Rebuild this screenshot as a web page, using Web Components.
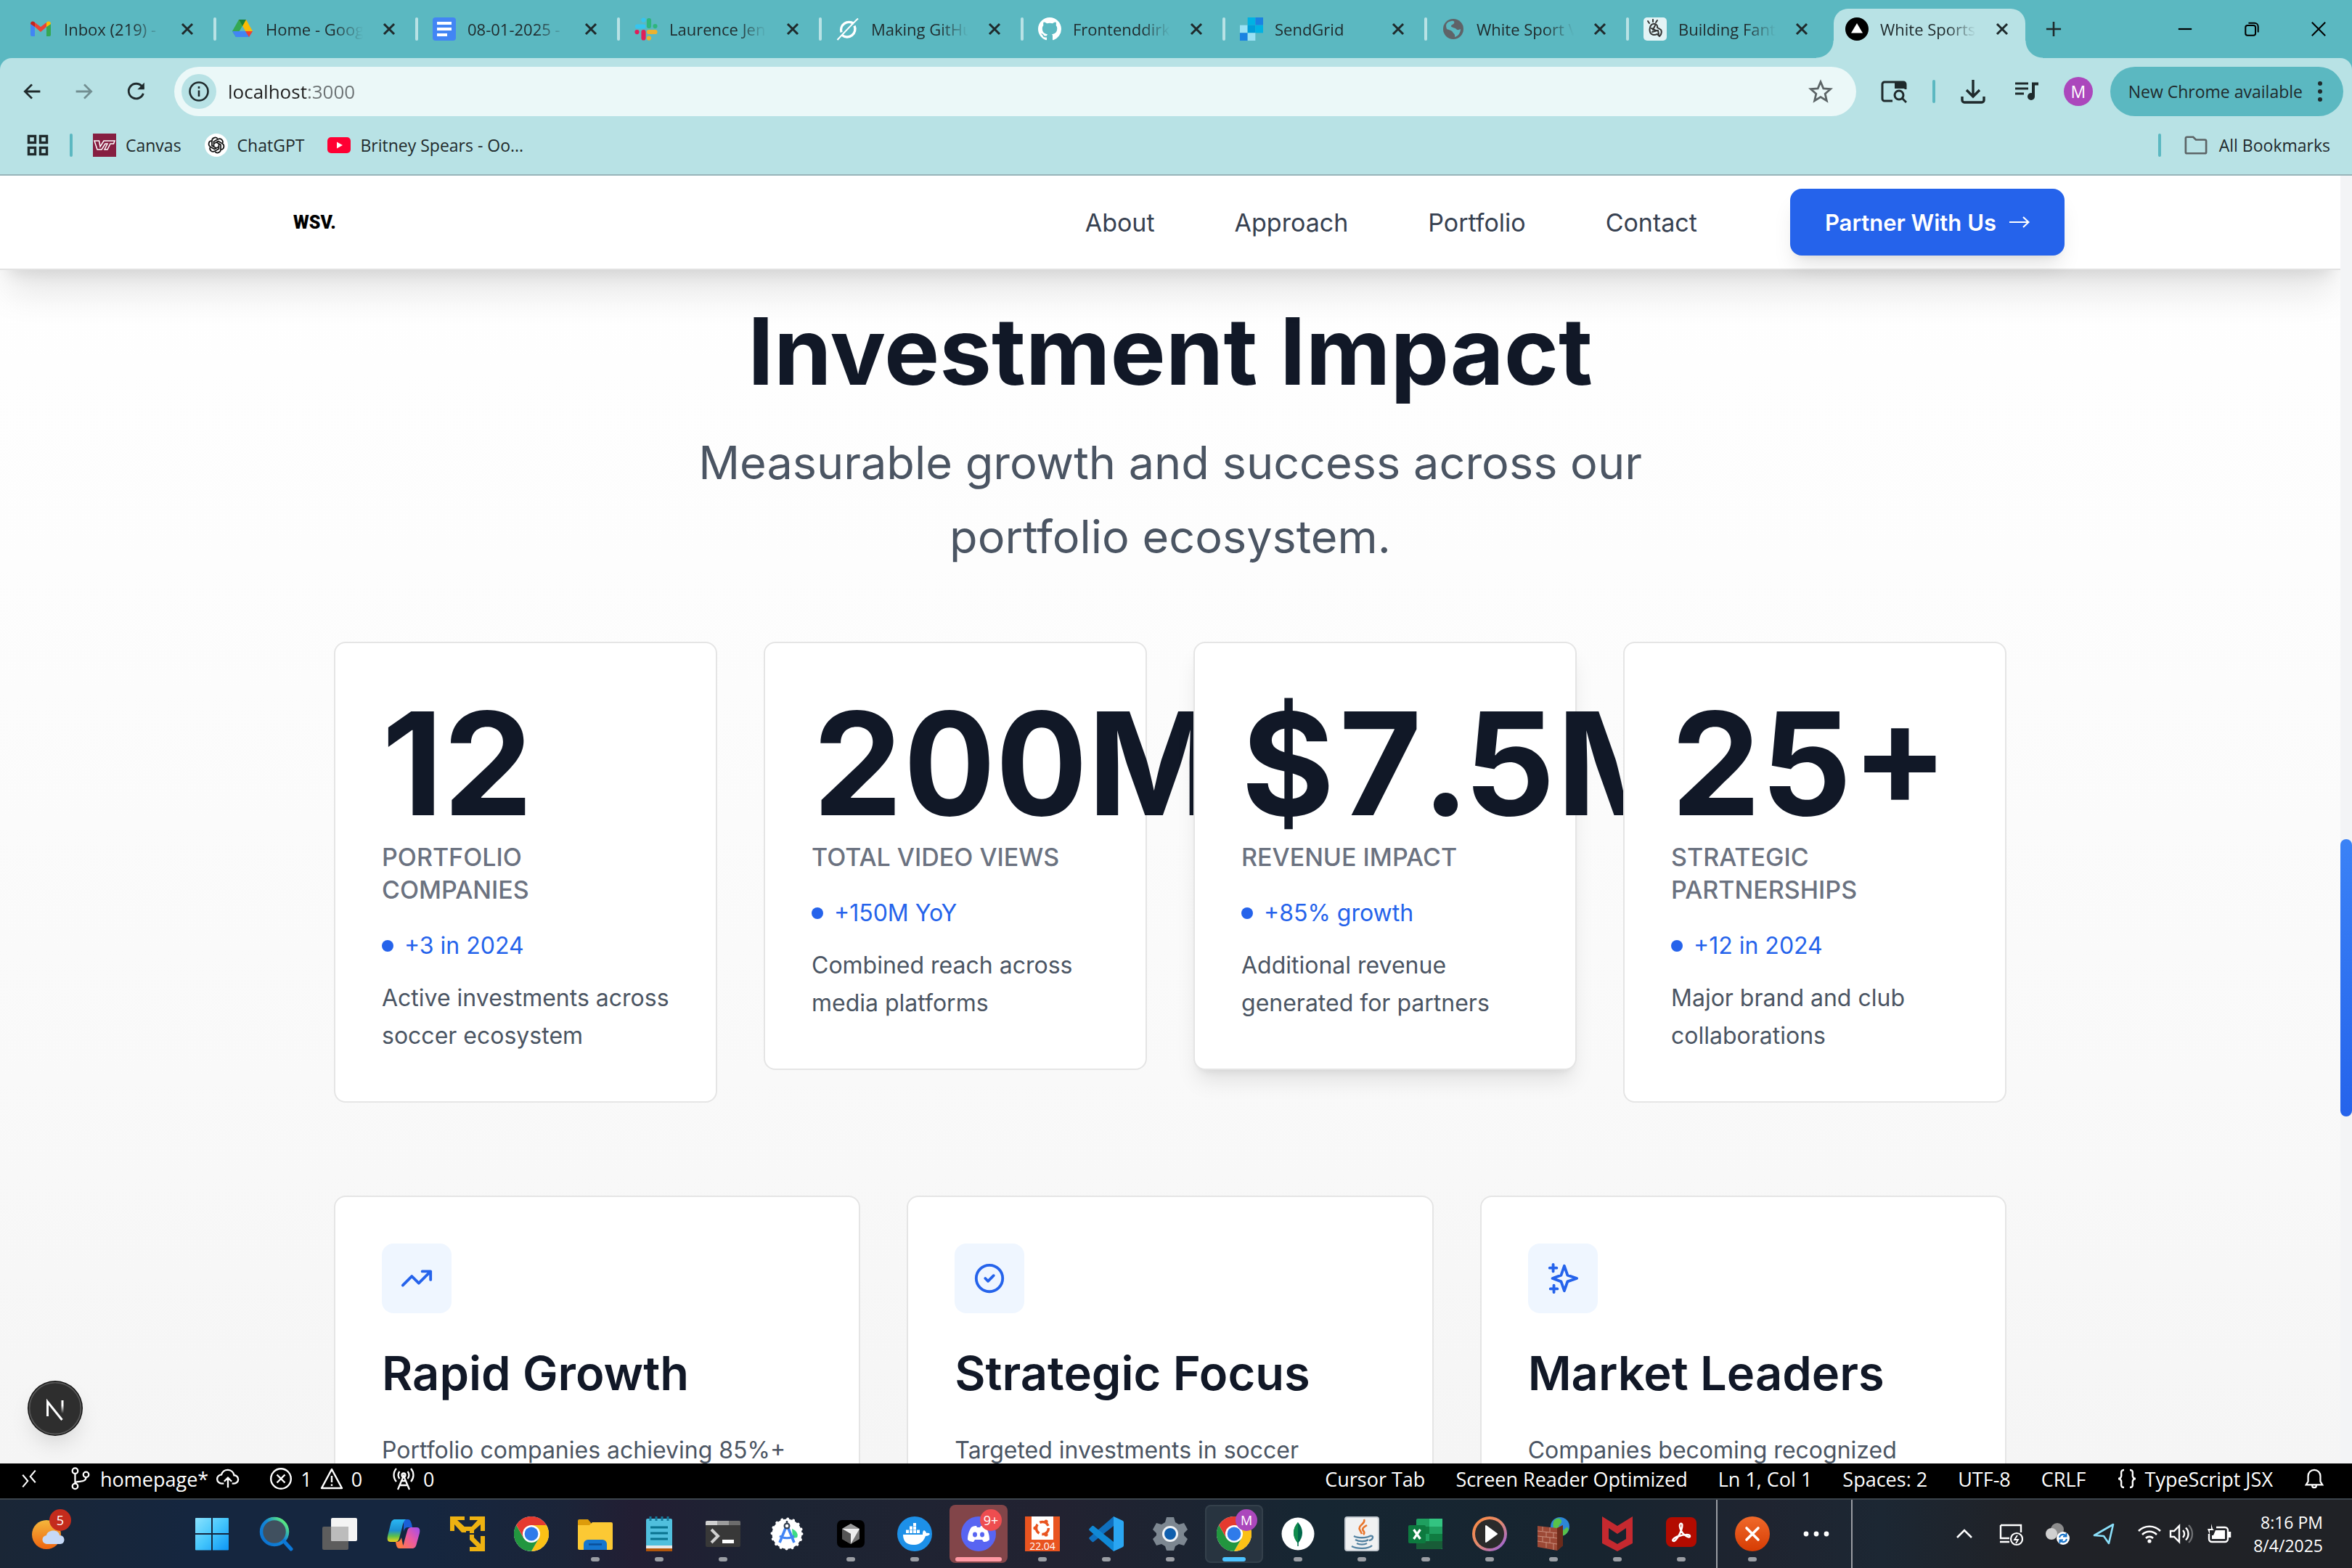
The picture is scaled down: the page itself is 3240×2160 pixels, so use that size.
<!DOCTYPE html>
<html lang="en">
<head>
<meta charset="utf-8">
<title>White Sports Ventures</title>
<style>
  html, body { margin: 0; height: 100%; }
  body { overflow: hidden; font-family: "Open Sans", "Noto Sans", sans-serif; }
</style>
</head>
<body>
<desktop-screen></desktop-screen>
<script>
/* ---------- icon registry: [viewBox, markup] ---------- */
const S = 'fill="none" stroke="currentColor"';
const CHROME = `<circle cx="24" cy="24" r="24" fill="#fff"/>
  <path d="M44.800 12A24 24 0 0 1 24 48L34.400 30 24 12Z" fill="#fbc116"/>
  <path d="M3.200 12A24 24 0 0 0 24 48L34.400 30 24 34 13.600 30Z" fill="#22963f"/>
  <path d="M3.200 12A24 24 0 0 1 44.800 12H24L13.600 30Z" fill="#e53a2f"/>
  <circle cx="24" cy="24" r="12" fill="#fff"/><circle cx="24" cy="24" r="9.400" fill="#2f7bea"/>`;
const PETAL = [0, 60, 120, 180, 240, 300].map(a => `<path d="M12.500 17.800V11l5.700-3.300a4.600 4.600 0 0 1 6.600 5.200" transform="rotate(${a} 16 16)"/>`).join('');
const ICONS = {
  gmail: ['0 0 32 32', `<path d="M2 9v15a2 2 0 0 0 2 2h4V13Z" fill="#4285f4"/><path d="M30 9v15a2 2 0 0 1-2 2h-4V13Z" fill="#34a853"/><path d="M8 13v-6l8 6 8-6v6l-8 7Z" fill="#ea4335"/><path d="M2 9c0-4 4-4.500 6-2v6L2 9Z" fill="#c5221f"/><path d="M30 9c0-4-4-4.500-6-2v6Z" fill="#fbbc04"/>`],
  drive: ['0 0 32 32', `<path d="M11 3h10l-5 9L7 27 2 19Z" fill="#34a853"/><path d="M11 3h10l9 16H20Z" fill="#fbbc04"/><path d="M2 19h28l-5 8H7Z" fill="#4285f4"/><path d="M20 19h10l-5 8Z" fill="#ea4335"/><path d="M16 12l4 7h-8Z" fill="#5bb8c1"/><path d="M11 3h10l-5 9Z" fill="#188038"/>`],
  docs: ['0 0 32 32', `<rect width="32" height="32" rx="4" fill="#4285f4"/><path d="M6 8h20M6 16h20M6 24h14" stroke="#fff" stroke-width="4"/>`],
  slack: ['0 0 32 32', `<g stroke-width="6.200" stroke-linecap="round"><path d="M12.500 12.500H4" stroke="#36c5f0"/><path d="M12.500 3.500v.1" stroke="#36c5f0"/><path d="M20 12V4" stroke="#2eb67d"/><path d="M28.500 12v.1" stroke="#2eb67d"/><path d="M20 20h8.500" stroke="#ecb22e"/><path d="M20 28.500v.1" stroke="#ecb22e"/><path d="M12.500 20v8.500" stroke="#e01e5a"/><path d="M3.500 20v.1" stroke="#e01e5a"/></g>`],
  making: ['0 0 32 32', `<g fill="none" stroke="#fff"><path d="M24 8.500A11 11 0 0 0 7 20.500M8 24.500a11 11 0 0 0 17-13" stroke-width="3.400"/><path d="M1.500 31C8 24 21 10 30 1.500" stroke-width="2"/></g>`],
  github: ['0 0 16 16', `<path fill="#fff" d="M8 0C3.580 0 0 3.580 0 8c0 3.540 2.290 6.530 5.470 7.590.4.070.55-.17.55-.38 0-.19-.010-.82-.010-1.490-2.010.37-2.530-.49-2.690-.94-.090-.23-.48-.94-.82-1.130-.28-.15-.68-.52-.010-.53.63-.010 1.080.58 1.230.82.72 1.210 1.870.87 2.330.66.070-.52.28-.87.51-1.070-1.780-.2-3.640-.89-3.640-3.950 0-.87.31-1.590.82-2.150-.080-.2-.36-1.020.080-2.120 0 0 .67-.21 2.200.82.64-.18 1.320-.27 2-.27s1.360.09 2 .27c1.530-1.040 2.200-.82 2.200-.82.44 1.100.16 1.920.080 2.120.51.56.82 1.270.82 2.150 0 3.070-1.870 3.750-3.650 3.950.29.25.54.73.54 1.480 0 1.070-.010 1.930-.010 2.200 0 .21.15.46.55.38A8 8 0 0 0 16 8c0-4.420-3.580-8-8-8Z"/>`],
  sendgrid: ['0 0 33 33', `<path d="M11 0h11v11H11Z" fill="#00b2e3"/><path d="M22 0h11v11H22Z" fill="#1a82e2"/><path d="M0 11h11v11H0Z" fill="#99e1f4"/><path d="M11 11h11v11H11Z" fill="#009dd9"/><path d="M22 11h11v11H22Z" fill="#00b2e3"/><path d="M0 22h11v11H0Z" fill="#1a82e2"/><path d="M11 22h11v11H11Z" fill="#99e1f4"/>`],
  globe: ['0 0 32 32', `<circle cx="16" cy="16" r="14" fill="#5f6368"/><path d="M13 5c4-1 5 1 4 3s-4 2-4 4 5 2 7 4 4 1 6 0c0 6-4 10-8 11 1-4-2-5-3-7s-5-3-8-4c-3-8 2-10 6-11Z" fill="#5bb8c1"/><path d="M20 5c5 2 7 6 7 9-3 1-5 0-5-2s-3-2-3-4 1-2 1-3Z" fill="#5f6368"/>`],
  rocket: ['0 0 32 32', `<rect width="32" height="32" rx="5" fill="#e3f3f5"/><g fill="none" stroke="#333" stroke-width="2" stroke-linecap="round" stroke-linejoin="round"><path d="M11 10c4-3 9 0 8 4l5 3c2 4 0 7-2 9l-3-3c-4 2-9 1-10-3s-1-7 2-10Z"/><path d="M11 15l6 3M12 20l7-2M16 11l-3 6M20 18l1 5"/><path d="M8 8 6 5M13 6V3M17 7l2-3"/></g>`],
  vercel: ['0 0 32 32', `<circle cx="16" cy="16" r="16" fill="#000"/><path d="M16 8l8 13.500H8Z" fill="#fff"/>`],
  x: ['0 0 24 24', `<path d="M5 5l14 14M19 5 5 19" ${S} stroke-width="3"/>`],
  plus: ['0 0 24 24', `<path d="M12 1v22M1 12h22" ${S} stroke-width="2.800"/>`],
  min: ['0 0 24 24', `<path d="M2 12h20" ${S} stroke-width="2.400"/>`],
  restore: ['0 0 24 24', `<rect x="2.500" y="6.500" width="15" height="15" rx="3" ${S} stroke-width="2.200"/><path d="M7 3h9a5.500 5.500 0 0 1 5.500 5.500V17" ${S} stroke-width="2.200"/>`],
  winx: ['0 0 24 24', `<path d="M2 2l20 20M22 2 2 22" ${S} stroke-width="2.200"/>`],
  back: ['0 0 32 32', `<path d="M29 16H6M16 5 5 16l11 11" ${S} stroke-width="3.200"/>`],
  fwd: ['0 0 32 32', `<path d="M3 16h23M16 5l11 11-11 11" ${S} stroke-width="3.200"/>`],
  reload: ['0 0 32 32', `<path d="M26 19A11 11 0 1 1 24 8.500l2.500 3" ${S} stroke-width="3"/><path d="M27.500 3v10h-10Z" fill="currentColor"/>`],
  info: ['0 0 32 32', `<circle cx="16" cy="16" r="12.500" ${S} stroke-width="2.600"/><path d="M16 14.500V23M16 9v3" ${S} stroke-width="2.600"/>`],
  star: ['0 0 32 32', `<path d="M16 3.500l3.600 8.600 9.200.8-7 6.100 2.100 9-7.900-4.800L8.100 28l2.100-9-7-6.100 9.200-.8Z" ${S} stroke-width="2.600"/>`],
  tabsearch: ['0 0 36 32', `<path d="M16 29H5a3 3 0 0 1-3-3V6a3 3 0 0 1 3-3h26a3 3 0 0 1 3 3v7" ${S} stroke-width="3"/><path d="M19 3h15v9H19Z" fill="currentColor"/><circle cx="25" cy="21" r="6" ${S} stroke-width="3"/><path d="M29 25l6 6" ${S} stroke-width="3"/>`],
  download: ['0 0 34 34', `<path d="M17 1v22M8 15l9 9 9-9M2 24v5a3 3 0 0 0 3 3h24a3 3 0 0 0 3-3v-5" ${S} stroke-width="3.400"/>`],
  music: ['0 0 34 30', `<path d="M1 4h18M1 11h18M1 18h12" ${S} stroke-width="3"/><path d="M26 22V4.500h7" ${S} stroke-width="4"/><circle cx="23" cy="22" r="5" fill="currentColor"/>`],
  kebab: ['0 0 8 32', `<circle cx="4" cy="5" r="3" fill="currentColor"/><circle cx="4" cy="16" r="3" fill="currentColor"/><circle cx="4" cy="27" r="3" fill="currentColor"/>`],
  apps: ['0 0 32 32', `<g ${S} stroke-width="3.400"><rect x="3.500" y="3.500" width="9" height="9"/><rect x="19.500" y="3.500" width="9" height="9"/><rect x="3.500" y="19.500" width="9" height="9"/><rect x="19.500" y="19.500" width="9" height="9"/></g>`],
  vt: ['0 0 32 32', `<rect width="32" height="32" fill="#861f41"/><path d="M2 10h6.500l1.500 8 5-8h15l-1.500 4H24l-4 8h-4l4-8h-3l-5 8H6Z" fill="none" stroke="#fff" stroke-width="1.500"/>`],
  openai: ['0 0 32 32', `<circle cx="16" cy="16" r="16" fill="#fff"/><g fill="none" stroke="#111" stroke-width="1.700">${PETAL}</g>`],
  youtube: ['0 0 32 32', `<rect y="5" width="32" height="22" rx="5" fill="#ff0033"/><path d="M13 11.500v9l8-4.500Z" fill="#fff"/>`],
  folder: ['0 0 34 28', `<path d="M2 24V4a2 2 0 0 1 2-2h9l4 4h13a2 2 0 0 1 2 2v16a2 2 0 0 1-2 2H4a2 2 0 0 1-2-2Z" ${S} stroke-width="2.800"/>`],
  arrow: ['0 0 28 24', `<path d="M0 12h26M19 5l7.500 7-7.500 7" ${S} stroke-width="2.200"/>`],
  trend: ['0 0 24 24', `<path d="M22 7l-8.500 8.500-5-5L2 17M16 7h6v6" ${S} stroke-width="2" stroke-linecap="round" stroke-linejoin="round"/>`],
  check: ['0 0 24 24', `<circle cx="12" cy="12" r="9.500" ${S} stroke-width="2"/><path d="M9 12l2 2 4-4" ${S} stroke-width="2" stroke-linecap="round" stroke-linejoin="round"/>`],
  sparkles: ['0 0 24 24', `<path d="M13 3l2.300 6.700L22 12l-6.700 2.300L13 21l-2.300-6.700L4.500 12l6.200-2.300ZM5 2v5M2.500 4.500h5M5.500 17v5M3 19.500h5" ${S} stroke-width="2" stroke-linecap="round" stroke-linejoin="round"/>`],
  next: ['0 0 76 76', `<defs><linearGradient id="nf" x1="0" y1="0" x2="0" y2="1"><stop offset=".4" stop-color="#fff"/><stop offset="1" stop-color="#fff" stop-opacity="0"/></linearGradient></defs><circle cx="38" cy="38" r="38" fill="#111"/><circle cx="38" cy="38" r="35.500" fill="#2e2e2e" stroke="#555" stroke-width="2"/><path d="M27.500 49V29l20 25" fill="none" stroke="#fff" stroke-width="3"/><path d="M46.500 27h3v18h-3Z" fill="url(#nf)"/>`],
  remote: ['0 0 24 32', `<path d="M2 10l8 9.500L2 29M22 3l-8 9.500 8 9.500" ${S} stroke-width="2.400"/>`],
  branch: ['0 0 28 34', `<g ${S} stroke-width="2.400"><circle cx="6" cy="5.500" r="4"/><circle cx="6" cy="28" r="4"/><circle cx="22" cy="11" r="4"/><path d="M6 9.500V24M22 15c0 5-4 6-9 6-4 0-7 1-7 3"/></g>`],
  cloud: ['0 0 34 28', `<path d="M11 21H8a6.500 6.500 0 0 1-.5-13A9.500 9.500 0 0 1 26 9a6 6 0 0 1 0 12h-3M17 27V13M11.500 18l5.500-5.500 5.500 5.500" ${S} stroke-width="2.500"/>`],
  error: ['0 0 32 32', `<circle cx="16" cy="16" r="13.800" ${S} stroke-width="2.400"/><path d="M10.500 10.500l11 11M21.500 10.500l-11 11" ${S} stroke-width="2.400"/>`],
  warn: ['0 0 32 32', `<path d="M16 3 2 29h28Z" ${S} stroke-width="2.400" stroke-linejoin="round"/><path d="M16 12v9M16 23.500v2.500" ${S} stroke-width="2.400"/>`],
  antenna: ['0 0 32 32', `<g ${S} stroke-width="2.300"><path d="M8 31l8-19 8 19M10.500 25h11M13 19h6"/><circle cx="16" cy="11" r="2.500"/><path d="M10.500 16a7.500 7.500 0 0 1 0-10M21.500 16a7.500 7.500 0 0 0 0-10M6 20A13.500 13.500 0 0 1 6 2M26 20a13.500 13.500 0 0 0 0-18"/></g>`],
  bell: ['0 0 30 32', `<path d="M3 25h24l-3-5v-8a9 9 0 0 0-18 0v8ZM12 26a3 3 0 0 0 6 0" ${S} stroke-width="2.400"/>`],
  braces: ['0 0 28 28', `<path d="M10 2C4 2 7 8 6 11c-.5 2-2 3-4 3 2 0 3.500 1 4 3 1 3-2 9 4 9M18 2c6 0 3 6 4 9 .5 2 2 3 4 3-2 0-3.500 1-4 3-1 3 2 9-4 9" ${S} stroke-width="2.400"/>`],
  weather: ['0 0 48 48', `<defs><linearGradient id="wg" x1="0" y1="0" x2="0" y2="1"><stop stop-color="#f4b73c"/><stop offset="1" stop-color="#ee640f"/></linearGradient></defs><circle cx="22" cy="25" r="20" fill="url(#wg)"/><path d="M23 38a6 6 0 0 1-1-12c1-8 17-9 18 0 9 0 8 12 1 12Z" fill="#c6d9f7"/>`],
  windows: ['0 0 48 48', `<defs><linearGradient id="ww" gradientUnits="userSpaceOnUse" x1="0" y1="0" x2="48" y2="48"><stop stop-color="#8fe4fe"/><stop offset=".5" stop-color="#45c6fc"/><stop offset="1" stop-color="#0a93f5"/></linearGradient></defs><path d="M1 3a1 1 0 0 1 1-1h21v21H1ZM25 2h21a1 1 0 0 1 1 1v20H25ZM1 25h22v21.500H2a1 1 0 0 1-1-1ZM25 25h22v20.500a1 1 0 0 1-1 1H25Z" fill="url(#ww)"/>`],
  search: ['0 0 48 48', `<defs><linearGradient id="sg" x1="1" y1="0" x2="0" y2="1"><stop offset=".1" stop-color="#5ff07a"/><stop offset=".45" stop-color="#1488d8"/><stop offset="1" stop-color="#0a6fd0"/></linearGradient></defs><circle cx="22" cy="21" r="18" fill="#40505f" stroke="url(#sg)" stroke-width="4.500"/><path d="M35 34l10 11" stroke="#0c78d8" stroke-width="5" stroke-linecap="round"/>`],
  taskview: ['0 0 48 48', `<rect x="0" y="14" width="36" height="32" rx="2" fill="#5d5d5d"/><rect x="12" y="2" width="36" height="32" rx="2" fill="#f4f4f4"/><path d="M12 14h24v20H14a2 2 0 0 1-2-2Z" fill="#bcbcbc"/>`],
  copilot: ['0 0 48 48', `<defs><linearGradient id="ca" x1="0" y1="0" x2="0" y2="1"><stop stop-color="#2ab8f4"/><stop offset=".5" stop-color="#1c8fd0"/><stop offset=".75" stop-color="#5cc04a"/><stop offset="1" stop-color="#f2d21b"/></linearGradient><linearGradient id="cb" x1="1" y1="0" x2="0" y2="1"><stop stop-color="#a04df0"/><stop offset=".5" stop-color="#ec5aa0"/><stop offset="1" stop-color="#ff7a45"/></linearGradient></defs><path d="M24 4h6c3 0 4 3 5 6l1 5h-6c-4 0-5 3-6 6Z" fill="#1a5fd6"/><path d="M12 4h15c-3 2-4 6-5 11l-4 15c-1 4-3 5-6 5H6c-4 0-5-3-4-8l4-16c1-5 3-7 6-7Z" fill="url(#ca)"/><path d="M24 44h-6c-3 0-4-3-5-9 4 0 6-1 8-6Z" fill="#ff7a45"/><path d="M36 44H19c4-2 5-5 6-10l4-14c1-4 3-5 6-5h7c4 0 5 3 4 8l-4 14c-1 5-3 7-6 7Z" fill="url(#cb)"/>`],
  vmware: ['0 0 48 48', `<g fill="#eeb211"><path d="M0 0h20v5H10l12 11v6h-6L6 11v9H0ZM48 0v20h-6V11L33 19v4h-6v-6L38 5H27V0ZM16 14h16v6H16ZM48 48H27v-6h10L27 32v-7h6v4l9 9V27h6Z"/></g>`],
  chrome: ['0 0 48 48', CHROME],
  explorer: ['0 0 48 48', `<path d="M0 6a2 2 0 0 1 2-2h12l5 6v8H0Z" fill="#dd9c0b"/><path d="M0 12h16l4-4h26a2 2 0 0 1 2 2v34a2 2 0 0 1-2 2H2a2 2 0 0 1-2-2Z" fill="#fcc934"/><path d="M8 46V38a6 6 0 0 1 6-6h20a6 6 0 0 1 6 6v8Z" fill="#1576cf"/><path d="M15 38.500h18" stroke="#0a4f98" stroke-width="2.500"/>`],
  notepad: ['0 0 48 48', `<rect x="6" y="3" width="36" height="45" rx="2" fill="#50bfdd"/><path d="M6 40h36v4H6Z" fill="#e8e8e8"/><path d="M6 44h36v4H6Z" fill="#b3560a"/><path d="M12 0v6M20 0v6M28 0v6M36 0v6" stroke="#157a9c" stroke-width="3"/><path d="M12 15h24M12 23h24M12 31h24" stroke="#08738f" stroke-width="3"/>`],
  terminal: ['0 0 48 48', `<rect y="6" width="48" height="36" rx="2" fill="#383838"/><path d="M0 12V8a2 2 0 0 1 2-2h14v6Z" fill="#cfcfcf"/><path d="M16 6h16v6H16Z" fill="#9c9c9c"/><path d="M32 6h14a2 2 0 0 1 2 2v4H32Z" fill="#6c6c6c"/><path d="M8 18l9 9-9 9" fill="none" stroke="#d0d0d0" stroke-width="4"/><path d="M23 32h16v5H23Z" fill="#fff"/>`],
  android: ['0 0 48 48', `<circle cx="24" cy="24" r="20.500" fill="#fff"/><circle cx="24" cy="24" r="20.500" fill="none" stroke="#fff" stroke-width="4" stroke-linecap="round" stroke-dasharray=".1 8"/><path d="M31 17c7 3 9 8 7 12l-6 1Z" fill="#3ddc84"/><path d="M23 14 14 36M25 14l9 22" stroke="#4285f4" stroke-width="3.600"/><path d="M14 27c7 4 13 4 20 0" fill="none" stroke="#4285f4" stroke-width="3"/><circle cx="24" cy="13" r="3.400" fill="#fff" stroke="#333f4f" stroke-width="2.200"/><path d="M24 6v4" stroke="#333f4f" stroke-width="2.500"/>`],
  cursor: ['0 0 48 48', `<rect x="5" y="5" width="38" height="38" rx="7" fill="#000"/><path d="M24 10l12 7v14l-12 7-12-7V17Z" fill="#777"/><path d="M12 17h24L24 38V24Z" fill="#eee"/><path d="M12 17l12 7v14l-12-7Z" fill="#555"/><path d="M24 10l12 7H12Z" fill="#999"/>`],
  docker: ['0 0 48 48', `<circle cx="24" cy="24" r="24" fill="#1d90e8"/><path d="M8 25h27c0-3 0-5 2-6 2 1 3 3 3 4 2-.5 4 0 5 1-1 2-3 3-6 3-3 8-8 12-17 12S8 34 8 25Z" fill="#fff"/><path d="M12 18.500h4V23h-4ZM17 18.500h4V23h-4ZM22 18.500h4V23h-4ZM27 18.500h4V23h-4ZM17 13.500h4V18h-4ZM22 13.500h4V18h-4ZM22 9h4v4h-4Z" fill="#fff"/>`],
  discord: ['0 0 48 48', `<circle cx="24" cy="24" r="24" fill="#5865f2"/><path d="M14 15c3-2 6-2 7-2l1 2h4l1-2c1 0 4 0 7 2 4 6 5 12 5 17-3 3-6 3-8 3l-2-3h-10l-2 3c-2 0-5 0-8-3 0-5 1-11 5-17Z" fill="#fff"/><ellipse cx="19" cy="25" rx="3" ry="3.400" fill="#5865f2"/><ellipse cx="29" cy="25" rx="3" ry="3.400" fill="#5865f2"/>`],
  ubuntu: ['0 0 48 48', `<rect width="48" height="48" fill="#e95420"/><rect x="9" width="30" height="32" fill="#fff"/><circle cx="24" cy="16" r="8.500" fill="none" stroke="#e95420" stroke-width="3.500" stroke-dasharray="14 4"/><g fill="#e95420"><circle cx="14" cy="16" r="2.600"/><circle cx="29" cy="7" r="2.600"/><circle cx="29" cy="25" r="2.600"/></g>`],
  vscode: ['0 0 48 48', `<path d="M34 0l12 5.500a3 3 0 0 1 2 3v31a3 3 0 0 1-2 3L34 48Z" fill="#2aa6f2"/><path d="M34 0v13L7 34.500a2 2 0 0 1-3 0l-3-3a2 2 0 0 1 0-3Z" fill="#0f6fbe"/><path d="M34 48V35L7 13.500a2 2 0 0 0-3 0l-3 3a2 2 0 0 0 0 3Z" fill="#1089d6"/>`],
  settings: ['0 0 48 48', `<path d="M19 1h10l2 7 5 3 7-2 5 9-5 5v3l5 5-5 9-7-2-5 3-2 6H19l-2-6-5-3-7 2-5-9 5-5v-3l-5-5 5-9 7 2 5-3Z" fill="#7d8791"/><circle cx="24" cy="24" r="11" fill="#f2f5f8"/><circle cx="24" cy="24" r="8" fill="#0f5fae"/>`],
  mongo: ['0 0 48 48', `<circle cx="24" cy="24" r="22.500" fill="#fff"/><path d="M24 8c8 9 8 20 0 29-8-9-8-20 0-29Z" fill="#00684a"/><path d="M24 8c-8 9-8 20 0 29Z" fill="#118d4d"/><path d="M24 34v7" stroke="#00684a" stroke-width="1.500"/>`],
  java: ['0 0 48 48', `<rect x="1" y="1" width="46" height="46" rx="3" fill="#f0f1f2" stroke="#c6ccd2" stroke-width="2"/><path d="M27 4c3 6-9 8-6 14l3 6M31 12c-5 3-8 5-4 9 1 2 0 3-1 4" fill="none" stroke="#e8762d" stroke-width="2.600"/><path d="M13 27c5 3 17 3 22 0M15 32c5 3 14 3 18 0M17 37c4 2 10 2 14 0M10 41c7 4 23 4 28-1M35 27c6-2 5 5-1 6" fill="none" stroke="#5382a1" stroke-width="2.400"/>`],
  excel: ['0 0 48 48', `<path d="M11 5a2 2 0 0 1 2-2h34v42H13a2 2 0 0 1-2-2Z" fill="#1f9f5f"/><path d="M29 3h18v11H29Z" fill="#33c481"/><path d="M11 14h18v10H11Z" fill="#107c41"/><path d="M29 24h18v11H29Z" fill="#107c41"/><path d="M11 34h36v9a2 2 0 0 1-2 2H13a2 2 0 0 1-2-2Z" fill="#185c37"/><rect y="12" width="24" height="25" rx="2" fill="#0d7a3f"/><path d="M7.500 18l9 13M16.500 18l-9 13" stroke="#fff" stroke-width="3.200"/>`],
  media: ['0 0 48 48', `<defs><linearGradient id="mg" x1="0" y1="0" x2="1" y2="1"><stop stop-color="#ff8a3c"/><stop offset=".5" stop-color="#e28a70"/><stop offset="1" stop-color="#8c5cf0"/></linearGradient></defs><circle cx="24" cy="24" r="24" fill="url(#mg)"/><circle cx="24" cy="24" r="20" fill="#2b2b2b"/><path d="M19 13v22l15-11Z" fill="#fff" stroke="#fff" stroke-width="2" stroke-linejoin="round"/>`],
  firewall: ['0 0 48 48', `<circle cx="33" cy="14" r="13" fill="#2c86d8"/><path d="M25 5c5-4 9-3 10 1s-4 5-4 9 5 6 9 2 4-1 5 1c-2 6-6 9-12 9-8-4-12-15-8-22Z" fill="#58c24a"/><path d="M2 13l27 3 8-4v28l-8 7L2 42Z" fill="#9c4936"/><path d="M29 16l8-4v28l-8 7Z" fill="#6b2b1b"/><path d="M2 20l27 3M2 27l27 3M2 34l27 4M9 14v6M19 15v6M14 21v7M24 23v7M9 28v7M19 29v7M14 35v8M24 37v9" stroke="#c98f7d" stroke-width="1"/>`],
  mcafee: ['0 0 48 48', `<path d="M3 0l21 13L45 0v37L24 48 3 37Zm9 16v15l12 7 12-7V16l-12 8Z" fill="#c5292f" fill-rule="evenodd"/>`],
  acrobat: ['0 0 48 48', `<rect x="3" y="1" width="42" height="41" rx="8" fill="#b30b00"/><path d="M23 10c3-1 3 3 1 9-2 6-7 14-10 15-4 0-1-5 7-7 6-2 15-3 15 0 0 4-9-1-12-7-2-4-3-9-1-10Z" fill="none" stroke="#fff" stroke-width="2.500"/>`],
  orangex: ['0 0 48 48', `<defs><linearGradient id="ox" x1="0" y1="0" x2="0" y2="1"><stop stop-color="#f0692a"/><stop offset="1" stop-color="#d63c04"/></linearGradient></defs><circle cx="24" cy="24" r="24" fill="url(#ox)"/><path d="M16 16l16 16M32 16 16 32" stroke="#fff" stroke-width="3.600" stroke-linecap="round"/>`],
  more: ['0 0 48 48', `<circle cx="10" cy="24" r="3.400" fill="#fff"/><circle cx="24" cy="24" r="3.400" fill="#fff"/><circle cx="38" cy="24" r="3.400" fill="#fff"/>`],
  chevron: ['0 0 32 32', `<path d="M6 21l10-10 10 10" ${S} stroke-width="2.600"/>`],
  cast: ['0 0 34 32', `<path d="M3 4h28v10M15 22H3V4M2 27h13" ${S} stroke-width="2.400"/><circle cx="25" cy="23" r="8" ${S} stroke-width="2.200"/><path d="M26 18l-4 6h5l-3 5" ${S} stroke-width="1.800"/>`],
  onedrive: ['0 0 34 32', `<circle cx="17" cy="10" r="9" fill="#8c8c8c"/><circle cx="9" cy="16" r="8" fill="#d0d0d0"/><circle cx="25" cy="22" r="9" fill="#fff"/><path d="M20 21a5 5 0 0 1 9-2M30 23a5 5 0 0 1-9 2M29.500 15v4.500H25M20.500 29v-4.500H25" fill="none" stroke="#1572c8" stroke-width="2"/>`],
  nav: ['0 0 32 32', `<path d="M29 3 3 18l13 1 7 10Z" fill="none" stroke="#8be0fa" stroke-width="2.600" stroke-linejoin="round"/>`],
  wifi: ['0 0 34 28', `<path d="M2 10a21 21 0 0 1 30 0M7 15a14 14 0 0 1 20 0M12 20a7 7 0 0 1 10 0" ${S} stroke-width="2.600"/><circle cx="17" cy="24" r="2.600" fill="currentColor"/>`],
  sound: ['0 0 34 28', `<path d="M2 10h5l7-7v22l-7-7H2ZM19 9a7 7 0 0 1 0 10M23 5.500a12 12 0 0 1 0 17" ${S} stroke-width="2.400"/><path d="M27 2a17 17 0 0 1 0 24" ${S} stroke-width="2.400" opacity=".35"/>`],
  battery: ['0 0 34 28', `<path d="M13 5h12a4 4 0 0 1 4 4v12a4 4 0 0 1-4 4H7a4 4 0 0 1-4-4v-7" ${S} stroke-width="2.400"/><path d="M31.500 11v8" ${S} stroke-width="3.500"/><path d="M12 9h13v12H7v-5h2Z" fill="currentColor"/><path d="M6 0v7H1l3 8V9h6L8 7Z" fill="currentColor"/>`],
};

/* ---------- base class ---------- */
class Base extends HTMLElement {
  connectedCallback() {
    if (this.shadowRoot) return;
    this.attachShadow({ mode: 'open' }).innerHTML =
      `<style>*{box-sizing:border-box}:host{box-sizing:border-box}:host([hidden]){display:none}button{font:inherit;color:inherit;border:0;background:none;padding:0;margin:0}a{color:inherit;text-decoration:none}${this.css()}</style>${this.html()}`;
  }
  at(name, fallback = '') { return this.getAttribute(name) ?? fallback; }
}
const define = (name, css, html) => customElements.define(name, class extends Base {
  css() { return typeof css === 'function' ? css(this) : css; }
  html() { return typeof html === 'function' ? html(this) : html; }
});

define('ui-icon',
  e => `:host{display:inline-flex;flex:none;width:${e.at('size', '32')}px;height:${e.at('size', '32')}px}svg{width:100%;height:100%;display:block}`,
  e => { const [vb, body] = ICONS[e.at('name')]; return `<svg viewBox="${vb}" aria-hidden="true">${body}</svg>`; });

/* ---------- browser chrome ---------- */
define('browser-tab', `
  :host{display:flex;align-items:center;flex:0 1 278px;min-width:0;height:68px;padding:0 26px 0 22px;position:relative;font-size:22px;color:#1f2a2c}
  :host([divided])::after{content:"";position:absolute;right:-2px;top:12px;width:4px;height:32px;border-radius:2px;background:#b8e2e5}
  :host([active]){flex-basis:264px;margin-left:6px;padding:0 20px 0 16px;background:#b8e2e5;border-radius:20px 20px 0 0}
  :host([active])::before,:host([active])::after{content:"";position:absolute;bottom:0;width:24px;height:24px}
  :host([active])::before{left:-24px;background:radial-gradient(circle at 0 0,transparent 23px,#b8e2e5 24px)}
  :host([active])::after{right:-24px;background:radial-gradient(circle at 100% 0,transparent 23px,#b8e2e5 24px)}
  .row{display:flex;align-items:center;width:100%;height:32px;margin-bottom:12px}
  .label{flex:1;min-width:0;margin:0 24px 0 16px;overflow:hidden;white-space:nowrap;line-height:32px;
    -webkit-mask-image:linear-gradient(90deg,#000 70%,transparent);mask-image:linear-gradient(90deg,#000 70%,transparent)}
  button{display:flex;width:24px;height:24px}`,
  e => `<div class="row" role="tab"><ui-icon name="${e.at('icon')}"></ui-icon><span class="label"><slot></slot></span><button aria-label="Close tab"><ui-icon name="x" size="24"></ui-icon></button></div>`);

define('tab-strip', `
  :host{display:flex;align-items:flex-end;height:80px;padding-left:18px;background:#5bb8c1;color:#1f2a2c}
  .new{display:flex;align-items:center;height:80px;margin-left:28px}
  .win{display:flex;align-items:center;height:80px;margin-left:auto;color:#000}
  .win button{width:92px;height:80px;display:flex;align-items:center;justify-content:center}`,
  `<browser-tab icon="gmail" divided>Inbox (219) -</browser-tab><browser-tab icon="drive" divided>Home - Goog</browser-tab>
   <browser-tab icon="docs" divided>08-01-2025 -</browser-tab><browser-tab icon="slack" divided>Laurence Jen</browser-tab>
   <browser-tab icon="making" divided>Making GitHu</browser-tab><browser-tab icon="github" divided>Frontenddirk</browser-tab>
   <browser-tab icon="sendgrid" divided>SendGrid</browser-tab><browser-tab icon="globe" divided>White Sport V</browser-tab>
   <browser-tab icon="rocket">Building Fant</browser-tab><browser-tab icon="vercel" active>White Sports</browser-tab>
   <button class="new" aria-label="New tab"><ui-icon name="plus" size="22"></ui-icon></button>
   <div class="win"><button aria-label="Minimize"><ui-icon name="min" size="22"></ui-icon></button><button aria-label="Restore"><ui-icon name="restore" size="22"></ui-icon></button><button aria-label="Close"><ui-icon name="winx" size="22"></ui-icon></button></div>`);

define('nav-toolbar', `
  :host{display:flex;align-items:center;height:92px;padding:0 12px 0 28px;color:#1f2a2c;font-size:23px}
  button{display:flex;align-items:center;justify-content:center}
  .b{width:32px;margin-right:40px}
  .b.off{opacity:.45}
  .box{flex:1;display:flex;align-items:center;height:68px;border-radius:34px;background:#ebf8f8;padding:0 32px 0 10px;margin-left:-4px}
  .info{width:48px;height:48px;border-radius:24px;background:#b8e2e5}
  input{flex:1;min-width:0;border:0;outline:0;margin:0 16px;padding:0;height:48px;font:26px "Open Sans","Noto Sans",sans-serif;color:#1f2a2c;
    background:linear-gradient(90deg,#1f1f1f 109px,#6b7173 109px);-webkit-background-clip:text;background-clip:text;-webkit-text-fill-color:transparent}
  .star{color:#5c6466}
  .right{display:flex;align-items:center;margin-left:34px}
  .sep{width:4px;height:32px;background:#5bb8c1;border-radius:2px;margin:0 35px}
  .music{margin:0 34px 0 40px}
  .av{width:40px;height:40px;border-radius:20px;background:#ab47bc;color:#fff}
  .pill{height:68px;border-radius:34px;background:#5bb8c1;margin-left:24px;padding:0 16px 0 25px;gap:8px}`,
  `<button class="b" aria-label="Back"><ui-icon name="back" size="28"></ui-icon></button>
   <button class="b off" aria-label="Forward"><ui-icon name="fwd" size="28"></ui-icon></button>
   <button class="b" aria-label="Reload"><ui-icon name="reload" size="30"></ui-icon></button>
   <div class="box"><button class="info" aria-label="Site information"><ui-icon name="info" size="32"></ui-icon></button>
     <input aria-label="Address" value="localhost:3000"><button class="star" aria-label="Bookmark"><ui-icon name="star" size="34"></ui-icon></button></div>
   <div class="right"><button aria-label="Search tabs"><ui-icon name="tabsearch" size="36"></ui-icon></button><span class="sep"></span>
     <button aria-label="Downloads"><ui-icon name="download" size="34"></ui-icon></button>
     <button class="music" aria-label="Media"><ui-icon name="music" size="34"></ui-icon></button>
     <button class="av" aria-label="Profile">M</button>
     <button class="pill">New Chrome available<ui-icon name="kebab" size="32"></ui-icon></button></div>`);

define('bookmarks-bar', `
  :host{display:flex;align-items:center;height:68px;padding:0 30px 12px 36px;color:#1f2a2c;font-size:23px}
  a,button{display:flex;align-items:center;gap:13px;white-space:nowrap}
  .sep{width:4px;height:32px;border-radius:2px;background:#5bb8c1;margin:0 28px}
  nav{display:flex;gap:32px}
  .all{margin-left:auto;display:flex;align-items:center}
  .all .sep{margin:0 32px 0 0}
  .all ui-icon{color:#5c6466}.all a{gap:16px}`,
  `<button aria-label="Apps"><ui-icon name="apps" size="32"></ui-icon></button><span class="sep"></span>
   <nav><a href="#"><ui-icon name="vt"></ui-icon>Canvas</a><a href="#"><ui-icon name="openai"></ui-icon>ChatGPT</a><a href="#"><ui-icon name="youtube"></ui-icon>Britney Spears - Oo...</a></nav>
   <div class="all"><span class="sep"></span><a href="#"><ui-icon name="folder"></ui-icon>All Bookmarks</a></div>`);

define('browser-chrome', `
  :host{display:block;background:#5bb8c1}
  .panel{background:#b8e2e5;border-bottom:2px solid #98b4b9;border-radius:16px 16px 0 0}`,
  `<tab-strip></tab-strip><div class="panel"><nav-toolbar></nav-toolbar><bookmarks-bar></bookmarks-bar></div>`);

/* ---------- site ---------- */
define('site-header', `
  :host{display:block;position:relative;z-index:5;background:#fff;border-bottom:2px solid #e2e2e2;box-shadow:0 40px 50px -10px rgba(0,0,0,.1),0 16px 20px -12px rgba(0,0,0,.1)}
  .in{display:flex;align-items:center;max-width:2560px;height:128px;margin:0 auto;padding:0 48px 0 72px;font-size:34px;font-weight:400;color:#374151}
  .logo{font:900 25px Roboto,"Liberation Sans",sans-serif;color:#000}
  nav{display:flex;gap:110px;margin-left:auto}
  .cta{display:flex;align-items:center;gap:18px;height:92px;margin-left:128px;padding:0 48px;border-radius:16px;background:#2563eb;color:#fff;font-weight:600;font-size:31px;
    box-shadow:0 20px 30px -6px rgba(0,0,0,.1),0 8px 12px -8px rgba(0,0,0,.1)}`,
  `<div class="in"><a class="logo" href="#">WSV.</a><nav><a href="#">About</a><a href="#">Approach</a><a href="#">Portfolio</a><a href="#">Contact</a></nav>
   <a class="cta" href="#">Partner With Us<ui-icon name="arrow" size="28"></ui-icon></a></div>`);

define('stat-card', `
  :host{display:block;position:relative;z-index:0;background:#fff;border:2px solid #e5e5e5;border-radius:16px;padding:64px;min-width:0}
  :host([raised]){box-shadow:0 20px 30px -6px rgba(0,0,0,.1),0 8px 12px -8px rgba(0,0,0,.1)}
  .n{font-size:196px;line-height:204px;font-weight:700;color:#111827;white-space:nowrap}
  :host([tabular]) .n{font-variant-numeric:tabular-nums}
  .l{margin-top:4px;font-size:34px;line-height:45px;font-weight:500;color:#6b7280;text-transform:uppercase}
  .t{display:flex;align-items:center;gap:15px;margin-top:32px;font-size:32px;line-height:45px;color:#2563eb;white-space:nowrap}
  .t::before{content:"";width:16px;height:16px;border-radius:8px;background:#2563eb}
  p{margin:24px -10px 0 0;font-size:32px;line-height:52px;color:#4b5563}`,
  e => `<div class="n">${e.at('value')}</div><div class="l">${e.at('label')}</div><div class="t">${e.at('trend')}</div><p><slot></slot></p>`);

define('feature-card', `
  :host{display:block;background:#fff;border:2px solid #e5e5e5;border-radius:16px;padding:64px;min-width:0}
  .i{display:flex;align-items:center;justify-content:center;width:96px;height:96px;border-radius:16px;background:#eff6ff;color:#2563eb}
  h3{margin:43px 0 40px;font-size:65px;line-height:80px;font-weight:600;color:#111827;white-space:nowrap}
  p{margin:0;font-size:32px;line-height:52px;color:#4b5563;white-space:nowrap}`,
  e => `<div class="i"><ui-icon name="${e.at('icon')}" size="46"></ui-icon></div><h3>${e.at('heading')}</h3><p><slot></slot></p>`);

define('impact-section', `
  :host{display:block;flex:1;padding-top:40px}
  h2{margin:0;text-align:center;font-size:128px;line-height:144px;font-weight:700;color:#111827}
  .sub{margin:30px auto 94px;max-width:1344px;text-align:center;font-size:63px;line-height:102px;color:#4b5563}
  .stats,.features{display:grid;max-width:2304px;margin:0 auto;gap:64px}
  .stats{grid-template-columns:repeat(4,minmax(0,1fr));align-items:start}
  .features{grid-template-columns:repeat(3,minmax(0,1fr));margin-top:128px}`,
  `<h2>Investment Impact</h2><p class="sub">Measurable growth and success across our portfolio ecosystem.</p>
   <div class="stats">
    <stat-card value="12" label="Portfolio Companies" trend="+3 in 2024">Active investments across soccer ecosystem</stat-card>
    <stat-card tabular value="200M" label="Total Video Views" trend="+150M YoY">Combined reach across media platforms</stat-card>
    <stat-card tabular raised value="$7.5M" label="Revenue Impact" trend="+85% growth">Additional revenue generated for partners</stat-card>
    <stat-card value="25+" label="Strategic Partnerships" trend="+12 in 2024">Major brand and club collaborations</stat-card>
   </div>
   <div class="features">
    <feature-card icon="trend" heading="Rapid Growth">Portfolio companies achieving 85%+</feature-card>
    <feature-card icon="check" heading="Strategic Focus">Targeted investments in soccer</feature-card>
    <feature-card icon="sparkles" heading="Market Leaders">Companies becoming recognized</feature-card>
   </div>`);

define('site-view', `
  :host{display:flex;flex:1;min-height:0;overflow:hidden;font-family:Inter,"Open Sans",sans-serif}
  .page{flex:1;min-width:0;position:relative;overflow:hidden;background:linear-gradient(#fff,#fdfdfd 30%,#f9f9f9 70%,#f5f5f5)}
  .bar{flex:none;width:16px;background:#f3f4f6;display:flex;flex-direction:column}
  .bar::before{content:"";flex:914}
  .bar::after{content:"";flex:478}
  .thumb{flex:382;border-radius:8px;background:linear-gradient(#3b82f6,#2563eb)}
  .dev{position:absolute;left:38px;bottom:38px;z-index:6;border-radius:38px;display:flex;box-shadow:0 16px 32px -8px rgba(0,0,0,.15)}`,
  `<div class="page"><site-header></site-header><impact-section></impact-section><button class="dev" aria-label="Next.js dev tools"><ui-icon name="next" size="76"></ui-icon></button></div>
   <div class="bar"><div class="thumb"></div></div>`);

/* ---------- editor status bar ---------- */
define('status-bar', `
  :host{display:flex;align-items:center;justify-content:space-between;height:48px;padding:0 37px 6px 26px;background:#000;color:#fff;font-size:27px;white-space:nowrap}
  div{display:flex;align-items:center;gap:41px}
  div:last-child{gap:42px}
  span{display:flex;align-items:center;gap:11px}`,
  `<div><ui-icon name="remote" size="28"></ui-icon><span><ui-icon name="branch" size="32"></ui-icon>homepage*<ui-icon name="cloud" size="32"></ui-icon></span>
    <span><ui-icon name="error" size="32"></ui-icon>1 <ui-icon name="warn" size="32"></ui-icon>0</span><span><ui-icon name="antenna" size="32"></ui-icon>0</span></div>
   <div><span>Cursor Tab</span><span>Screen Reader Optimized</span><span>Ln 1, Col 1</span><span>Spaces: 2</span><span>UTF-8</span><span>CRLF</span>
    <span><ui-icon name="braces" size="28"></ui-icon>TypeScript JSX</span><ui-icon name="bell" size="30"></ui-icon></div>`);

/* ---------- Windows taskbar ---------- */
define('task-app', `
  :host{display:flex;align-items:center;justify-content:center;flex:none;width:88px;height:94px;position:relative}
  button{position:relative;display:flex;align-items:center;justify-content:center;width:80px;height:80px;border-radius:8px}
  :host([tone=alert]) button{background:#824549}
  :host([tone=active]) button{background:#283440;box-shadow:inset 0 0 0 2px #34404b}
  :host([open]) button::after{content:"";position:absolute;bottom:2px;width:12px;height:6px;border-radius:3px;background:#9a9da3}
  :host([tone=alert]) button::after{width:64px;background:#ff99a4}
  :host([tone=active]) button::after{width:32px;background:#4cc2ff}
  .badge{position:absolute;right:8px;top:6px;min-width:30px;height:30px;border-radius:15px;color:#fff;font-size:18px;line-height:30px;text-align:center}
  .cap{position:absolute;left:16px;right:16px;top:50px;color:#fff;font-size:14px;line-height:14px;text-align:center}`,
  e => `<button aria-label="${e.at('label', e.at('icon'))}"><ui-icon name="${e.at('icon')}" size="48"></ui-icon>${e.hasAttribute('badge') ? `<span class="badge" style="background:${e.at('color')}">${e.at('badge')}</span>` : ''}${e.hasAttribute('caption') ? `<span class="cap">${e.at('caption')}</span>` : ''}</button>`);

define('task-bar', `
  :host{display:flex;align-items:center;height:96px;border-top:2px solid #3c444c;color:#fff;padding:0 40px 0 22px;
    background:linear-gradient(90deg,#1a2636,#15263f 8%,#15263f 18%,#1b2438 24%,#221e33 27%,#1c2433 33%,#222231 45%,#162632 56%,#17242f 68%,#1f2430 75%,#1c2733 80%,#202227 86%,#202226)}
  .apps{display:flex;margin-left:138px}
  .extra{display:flex;margin-left:4px;padding:0 4px;border:solid #9a9da3;border-width:0 2px}
  .tray{display:flex;align-items:center;margin-left:auto}
  .tray button{display:flex;justify-content:center;width:64px}
  .quick{display:flex;align-items:center;margin-left:14px;gap:10px}
  .quick ui-icon:last-child{margin-left:8px}
  .clock{min-width:126px;text-align:right;font-size:23px;line-height:32px}`,
  `<task-app icon="weather" badge="5" color="#c42b1c" label="Weather"></task-app>
   <div class="apps">
   <task-app icon="windows"></task-app><task-app icon="search"></task-app><task-app icon="taskview"></task-app><task-app icon="copilot"></task-app>
   <task-app icon="vmware"></task-app><task-app icon="chrome"></task-app><task-app icon="explorer" open></task-app><task-app icon="notepad" open></task-app>
   <task-app icon="terminal" open></task-app><task-app icon="android"></task-app><task-app icon="cursor" open></task-app><task-app icon="docker" open></task-app>
   <task-app icon="discord" open tone="alert" badge="9+" color="#ee4d50"></task-app><task-app icon="ubuntu" open caption="22.04"></task-app><task-app icon="vscode" open></task-app>
   <task-app icon="settings" open></task-app><task-app icon="chrome" open tone="active" badge="M" color="#ab47bc"></task-app><task-app icon="mongo" open></task-app>
   <task-app icon="java" open></task-app><task-app icon="excel" open></task-app><task-app icon="media" open></task-app><task-app icon="firewall" open></task-app>
   <task-app icon="mcafee" open></task-app><task-app icon="acrobat" open></task-app></div>
   <div class="extra"><task-app icon="orangex" open label="Recorder"></task-app><task-app icon="more"></task-app></div>
   <div class="tray"><button aria-label="Hidden icons"><ui-icon name="chevron" size="32"></ui-icon></button><button aria-label="Display"><ui-icon name="cast" size="34"></ui-icon></button>
    <button aria-label="OneDrive"><ui-icon name="onedrive" size="34"></ui-icon></button><button aria-label="Location"><ui-icon name="nav" size="32"></ui-icon></button>
    <div class="quick"><ui-icon name="wifi" size="34"></ui-icon><ui-icon name="sound" size="34"></ui-icon><ui-icon name="battery" size="34"></ui-icon></div>
    <div class="clock"><div>8:16 PM</div><div>8/4/2025</div></div></div>`);

define('desktop-screen',
  `:host{display:flex;flex-direction:column;height:100vh}browser-chrome,status-bar,task-bar{flex:none}`,
  `<browser-chrome></browser-chrome><site-view></site-view><status-bar></status-bar><task-bar></task-bar>`);
</script>
</body>
</html>
